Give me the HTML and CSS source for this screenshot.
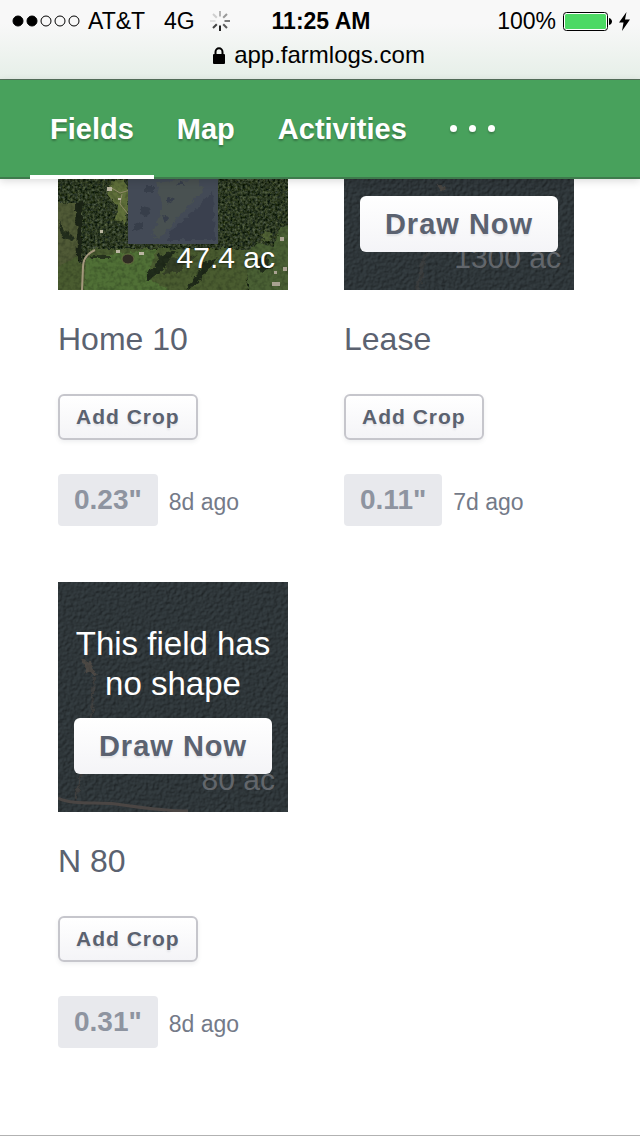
FILE: index.html
```html
<!DOCTYPE html>
<html lang="en">
<head>
    <meta charset="UTF-8">
    <meta name="viewport" content="width=device-width, initial-scale=1.0">
    <title>FarmLogs - Fields</title>
    <link rel="stylesheet" href="styles.css">
</head>
<body>
    <!-- Shared textures for the aerial photos -->
    <svg class="defs" width="0" height="0" aria-hidden="true">
        <filter id="forest" x="0" y="0" width="100%" height="100%" color-interpolation-filters="sRGB">
            <feTurbulence type="fractalNoise" baseFrequency="0.4" numOctaves="3" seed="4"/>
            <feColorMatrix values="0.5 0.1 0 0 -0.12  0.5 0.1 0 0 -0.07  0.42 0 0.1 0 -0.12  0 0 0 0 1"/>
        </filter>
        <filter id="rough" x="-10%" y="-10%" width="120%" height="120%" color-interpolation-filters="sRGB">
            <feTurbulence type="fractalNoise" baseFrequency="0.18" numOctaves="3" seed="9" result="n"/>
            <feDisplacementMap in="SourceGraphic" in2="n" scale="7" xChannelSelector="R" yChannelSelector="G"/>
        </filter>
        <filter id="grain" x="0" y="0" width="100%" height="100%" color-interpolation-filters="sRGB">
            <feTurbulence type="fractalNoise" baseFrequency="0.25" numOctaves="3" seed="12"/>
            <feColorMatrix values="0 0 0 0 0.05  0 0 0 0 0.08  0 0 0 0 0.04  1.6 0 0 0 -0.65"/>
        </filter>
        <filter id="night" x="0" y="0" width="100%" height="100%" color-interpolation-filters="sRGB">
            <feTurbulence type="fractalNoise" baseFrequency="0.28" numOctaves="3" seed="7"/>
            <feDiffuseLighting surfaceScale="0.9" lighting-color="#384145">
                <feDistantLight azimuth="225" elevation="56"/>
            </feDiffuseLighting>
        </filter>
    </svg>

    <header class="header">
        <div class="status-bar">
            <div class="status-left">
                <svg class="signal" width="68" height="12" viewBox="0 0 68 12" fill="none" stroke="#000">
                    <circle cx="6" cy="6" r="5" fill="#000"/>
                    <circle cx="20" cy="6" r="5" fill="#000"/>
                    <circle cx="34" cy="6" r="5"/>
                    <circle cx="48" cy="6" r="5"/>
                    <circle cx="62" cy="6" r="5"/>
                </svg>
                <span>AT&amp;T</span>
                <span class="network">4G</span>
                <svg width="20" height="20" viewBox="-10 -10 20 20" stroke-width="2">
                    <path d="M0-4.500V-10" stroke="#b5b5b5"/>
                    <path d="M3.200-3.200L7-7" stroke="#999"/>
                    <path d="M4.500 0H10" stroke="#7b7b7b"/>
                    <path d="M3.200 3.200L7 7" stroke="#5c5c5c"/>
                    <path d="M0 4.500V10" stroke="#222"/>
                    <path d="M-3.200 3.200L-7 7" stroke="#444"/>
                    <path d="M-4.500 0H-10" stroke="#e0e0e0"/>
                    <path d="M-3.200-3.200L-7-7" stroke="#cfcfcf"/>
                </svg>
            </div>
            <div class="clock">11:25 AM</div>
            <div class="status-right">
                <span>100%</span>
                <svg width="49" height="19" viewBox="0 0 49 19">
                    <rect x=".5" y=".5" width="44" height="18" rx="3" fill="#fff" stroke="#000"/>
                    <rect x="2" y="2" width="41" height="15" rx="1.500" fill="#4cd964"/>
                    <path d="M46 6c4 1 4 6 0 7z" fill="#000"/>
                </svg>
                <svg width="11" height="19" viewBox="0 0 11 19">
                    <path d="M7.500 0L0 10.500H4.500L3 19L11 7.500H6z" fill="#000"/>
                </svg>
            </div>
        </div>
        <div class="address">
            <svg width="12" height="17" viewBox="0 0 12 17">
                <path d="M2.500 8V5a3.500 3.800 0 0 1 7 0V8" fill="none" stroke="#000" stroke-width="2"/>
                <rect y="7" width="12" height="10" rx="1" fill="#000"/>
            </svg>
            <span>app.farmlogs.com</span>
        </div>
    </header>

    <nav class="nav">
        <a class="tab active" href="#fields">Fields</a>
        <a class="tab" href="#map">Map</a>
        <a class="tab" href="#activities">Activities</a>
        <button class="more" type="button" aria-label="More">
            <i class="dot"></i><i class="dot"></i><i class="dot"></i>
        </button>
    </nav>

    <main class="fields">
        <article class="field">
            <div class="photo cut">
                <svg class="aerial" viewBox="0 0 230 111" preserveAspectRatio="xMidYMax slice" aria-hidden="true">
                    <rect width="230" height="111" filter="url(#forest)"/>
                    <g filter="url(#rough)">
                        <path d="M-6 24H20V84H27L34 70H192L188 117H-6z" fill="#4a5c30"/>
                        <path d="M-6 24H19V78L-6 90z" fill="#505a36"/>
                        <path d="M28 78L98 70L90 98L120 117H26z" fill="#507036"/>
                        <path d="M52 2L66 0L71 16L68 45L58 42L60 26L50 18z" fill="#60703a"/>
                        <path d="M190 72L200 63L215 68L222 50L236 44V117H190z" fill="#4a6034"/>
                        <path d="M146 84L160 79L140 104L128 111z" fill="#1f2a19"/>
                        <path d="M100 76L118 72L104 92L90 101L87 96L97 88z" fill="#212c1b"/>
                        <path d="M112 80L140 76L120 92L104 96z" fill="#343f26"/>
                        <path d="M1 42L3 58L16 62L14 56L6 52z" fill="#242f1d"/>
                        <path d="M18 24H24V82H19z" fill="#1b2416"/>
                        <path d="M34 76H52V80H32z" fill="#28351e"/>
                        <path d="M195 82L208 78L214 88L202 94z" fill="#222e1b"/>
                        <path d="M206 52L214 55L212 64L204 62z" fill="#526436"/>
                    </g>
                    <rect width="230" height="111" filter="url(#grain)" opacity=".4"/>
                    <path d="M37 71C28 75 25 81 25 88L24 111" fill="none" stroke="#a3977c" stroke-width="2"/>
                    <path d="M52 8L62 14L72 11M64 15L62 25L70 35" fill="none" stroke="#8f8a68"/>
                    <ellipse cx="70" cy="80" rx="6" ry="5" fill="#302c23" stroke="#626b3e"/>
                    <path d="M49 8h5v4h-5zM60 19h3v2h-3zM42 51h3v3h-3zM58 71h4v3h-4zM81 73h5v3h-5z" fill="#bbb6a2"/>
                    <path d="M214 103h8v4h-8zM222 58h4v4h-4zM225 88h4v4h-4zM216 92h3v3h-3z" fill="#a9a291"/>
                    <path d="M70 0H160V65H70z" fill="#434a56"/>
                    <g filter="url(#rough)">
                        <path d="M155 12L157 61H108L117 48L139 29z" fill="#3a404e"/>
                        <path d="M98 2L140 0L145 12L117 42L102 61L94 55L104 31z" fill="#495151"/>
                        <path d="M88 7h8v7h-8zM82 26l9 3-2 9-7-2zM76 45l8-2v7l-8 3zM104 36l7 2-4 5zM108 18l8 3-6 4zM118 5l6-3 3 5z" fill="#373e4a"/>
                    </g>
                </svg>
                <span class="acres">47.4 ac</span>
            </div>
            <h2>Home 10</h2>
            <button class="add-crop" type="button">Add Crop</button>
            <div class="rain">
                <span class="amount">0.23"</span>
                <span class="when">8d ago</span>
            </div>
        </article>

        <article class="field">
            <div class="photo cut empty">
                <svg class="aerial" viewBox="0 0 230 111" preserveAspectRatio="xMidYMax slice" aria-hidden="true">
                    <rect width="230" height="111" filter="url(#night)"/>
                    <path d="M92 5L102 9L98 13z" fill="#5a5148" opacity=".6" filter="url(#rough)"/>
                    <path d="M84 74C75 84 80 92 73 111" fill="none" stroke="#4d4743" stroke-width="4" opacity=".35" filter="url(#rough)"/>
                </svg>
                <span class="acres">1300 ac</span>
                <div class="overlay">
                    <button class="draw" type="button">Draw Now</button>
                </div>
            </div>
            <h2>Lease</h2>
            <button class="add-crop" type="button">Add Crop</button>
            <div class="rain">
                <span class="amount">0.11"</span>
                <span class="when">7d ago</span>
            </div>
        </article>

        <article class="field">
            <div class="photo empty">
                <svg class="aerial" viewBox="0 0 230 230" preserveAspectRatio="xMidYMax slice" aria-hidden="true">
                    <rect width="230" height="230" filter="url(#night)"/>
                    <path d="M24 77L32 80L40 93L28 90z" fill="#5d5249" opacity=".6" filter="url(#rough)"/>
                    <path d="M36 94L34 130L23 190L18 218" fill="none" stroke="#514944" stroke-width="2" opacity=".5" filter="url(#rough)"/>
                    <path d="M0 216C15 223 35 220 58 222C80 225 105 229 130 229" fill="none" stroke="#4b4644" stroke-width="3"/>
                </svg>
                <span class="acres">80 ac</span>
                <div class="overlay">
                    <p>This field has no shape</p>
                    <button class="draw" type="button">Draw Now</button>
                </div>
            </div>
            <h2>N 80</h2>
            <button class="add-crop" type="button">Add Crop</button>
            <div class="rain">
                <span class="amount">0.31"</span>
                <span class="when">8d ago</span>
            </div>
        </article>
    </main>
</body>
</html>
```
FILE: styles.css
```css
* {
    box-sizing: border-box;
}

body {
    margin: 0;
    min-height: 100vh;
    display: flex;
    flex-direction: column;
    background-color: #fff;
    color: #5b6270;
    font-family: "Liberation Sans", Helvetica, Arial, sans-serif;
}

button {
    font-family: inherit;
    font-weight: bold;
    letter-spacing: 1px;
    color: #5b6270;
    cursor: pointer;
}

svg {
    display: block;
    flex-shrink: 0;
}

.defs {
    position: absolute;
}

/* Browser chrome */
.header {
    height: 80px;
    padding: 6px 10px 0 12px;
    background: linear-gradient(#f8f8f8 30%, #e6efe8);
    border-bottom: 1px solid #55705b;
    color: #000;
}

.status-bar {
    display: grid;
    grid-template-columns: 1fr auto 1fr;
    align-items: center;
    font-size: 23px;
    line-height: 30px;
}

.status-left,
.status-right {
    display: flex;
    align-items: center;
    gap: 8px;
}

.status-left .network {
    margin: 0 7px 0 11px;
}

.status-right {
    justify-content: flex-end;
    gap: 7px;
}

.clock {
    font-weight: bold;
}

.address {
    display: flex;
    align-items: center;
    justify-content: center;
    gap: 9px;
    padding-right: 4px;
    font-size: 24px;
    line-height: 38px;
}

/* Main navigation */
.nav {
    position: relative;
    display: flex;
    gap: 3px;
    height: 99px;
    padding: 0 30px;
    background-color: #48a15c;
    box-shadow: inset 0 -2px #3e7b4c, 0 2px 8px rgba(0, 0, 0, 0.15);
    z-index: 10;
}

.tab {
    padding: 0 20px;
    border-bottom: 4px solid transparent;
    color: #fff;
    font-size: 29px;
    font-weight: bold;
    line-height: 98px;
    text-decoration: none;
    text-shadow: 0 2px 2px rgba(0, 0, 0, 0.25);
}

.tab.active {
    border-bottom-color: #fff;
}

.more {
    display: flex;
    align-items: center;
    gap: 12px;
    padding: 0 20px 2px;
    border: none;
    background: none;
}

.dot {
    width: 7px;
    height: 7px;
    border-radius: 50%;
    background-color: #fff;
    box-shadow: 0 2px 2px rgba(0, 0, 0, 0.2);
}

/* Field cards */
.fields {
    flex: 1;
    display: grid;
    grid-template-columns: repeat(auto-fill, 230px);
    align-content: start;
    gap: 56px;
    padding: 0 58px 56px;
    border-bottom: 1px solid #b2b2b2;
}

.field h2 {
    margin: 29px 0 35px;
    font-size: 32px;
    font-weight: normal;
    line-height: 40px;
}

.photo {
    position: relative;
    height: 230px;
    overflow: hidden;
    color: #fff;
}

.photo.cut {
    height: 111px;
}

.aerial {
    width: 100%;
    height: 100%;
}

.acres {
    position: absolute;
    right: 13px;
    bottom: 14px;
    font-size: 30px;
    line-height: 36px;
    text-shadow: 0 1px 2px rgba(0, 0, 0, 0.5);
}

.empty .acres {
    color: #62666b;
    text-shadow: none;
}

.overlay {
    position: absolute;
    inset: 0;
    display: flex;
    flex-direction: column;
    align-items: center;
    justify-content: flex-end;
    padding: 0 16px 38px;
}

.overlay p {
    margin: 0 0 14px;
    font-size: 33px;
    line-height: 40px;
    text-align: center;
}

.draw {
    width: 100%;
    height: 56px;
    padding: 0;
    border: none;
    border-radius: 6px;
    background: linear-gradient(#fff, #f4f4f7);
    font-size: 29px;
    text-shadow: 0 2px 2px rgba(91, 98, 112, 0.12);
}

.add-crop {
    display: block;
    height: 46px;
    padding: 0 16px;
    border: 2px solid #c6c6cc;
    border-radius: 6px;
    background: linear-gradient(#fff, #f4f4f7);
    box-shadow: 0 2px 4px rgba(91, 98, 112, 0.1);
    font-size: 21px;
    text-shadow: 0 2px 2px rgba(91, 98, 112, 0.12);
}

.rain {
    display: flex;
    align-items: center;
    gap: 11px;
    margin-top: 34px;
}

.amount {
    padding: 0 16px;
    border-radius: 4px;
    background-color: #e8e9ed;
    color: #8e94a0;
    font-size: 28px;
    font-weight: bold;
    line-height: 52px;
}

.when {
    padding-top: 4px;
    color: #747a88;
    font-size: 23px;
}
```
